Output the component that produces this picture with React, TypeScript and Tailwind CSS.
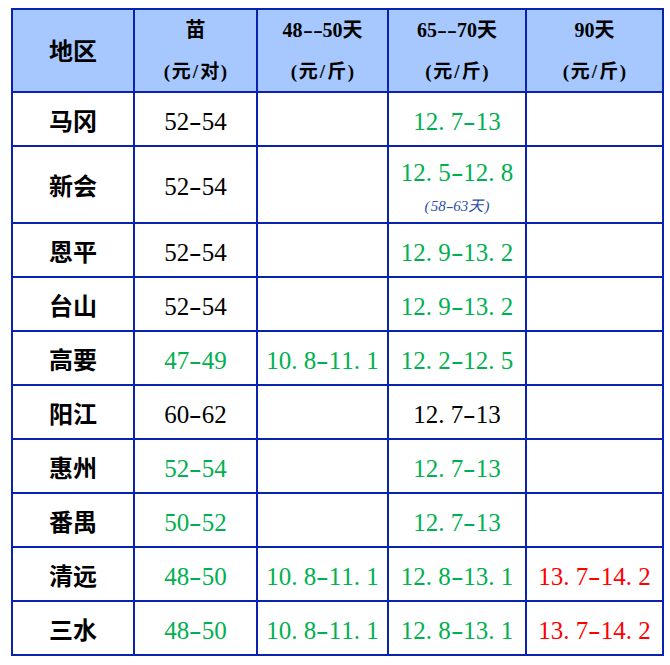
const FONT = { fontFamily: '"Liberation Serif", "Noto Sans CJK SC", serif' }

type Tone = 'black' | 'green' | 'red'

interface Cell {
  text: string
  tone?: Tone
  note?: string
}

interface Row {
  region: string
  cells: Cell[]
}

const toneClass: Record<Tone, string> = {
  black: 'text-black',
  green: 'text-[#00b050]',
  red: 'text-[#ff0000]',
}

const rows: Row[] = [
  { region: '马冈', cells: [{ text: '52-54' }, { text: '' }, { text: '12.7-13', tone: 'green' }, { text: '' }] },
  {
    region: '新会',
    cells: [{ text: '52-54' }, { text: '' }, { text: '12.5-12.8', tone: 'green', note: '(58-63天)' }, { text: '' }],
  },
  { region: '恩平', cells: [{ text: '52-54' }, { text: '' }, { text: '12.9-13.2', tone: 'green' }, { text: '' }] },
  { region: '台山', cells: [{ text: '52-54' }, { text: '' }, { text: '12.9-13.2', tone: 'green' }, { text: '' }] },
  {
    region: '高要',
    cells: [
      { text: '47-49', tone: 'green' },
      { text: '10.8-11.1', tone: 'green' },
      { text: '12.2-12.5', tone: 'green' },
      { text: '' },
    ],
  },
  { region: '阳江', cells: [{ text: '60-62' }, { text: '' }, { text: '12.7-13' }, { text: '' }] },
  {
    region: '惠州',
    cells: [{ text: '52-54', tone: 'green' }, { text: '' }, { text: '12.7-13', tone: 'green' }, { text: '' }],
  },
  {
    region: '番禺',
    cells: [{ text: '50-52', tone: 'green' }, { text: '' }, { text: '12.7-13', tone: 'green' }, { text: '' }],
  },
  {
    region: '清远',
    cells: [
      { text: '48-50', tone: 'green' },
      { text: '10.8-11.1', tone: 'green' },
      { text: '12.8-13.1', tone: 'green' },
      { text: '13.7-14.2', tone: 'red' },
    ],
  },
  {
    region: '三水',
    cells: [
      { text: '48-50', tone: 'green' },
      { text: '10.8-11.1', tone: 'green' },
      { text: '12.8-13.1', tone: 'green' },
      { text: '13.7-14.2', tone: 'red' },
    ],
  },
]

// half-width ascii, like the original's SimSun rendering
function Mono({ text }: { text: string }) {
  return (
    <>
      {[...text].map((c, i) => {
        if (c.charCodeAt(0) >= 128) return <span key={i}>{c}</span>
        if (c === '.')
          return (
            <span key={i} className="inline-block w-[0.5em] text-left">
              {c}
            </span>
          )
        if (c === '-')
          return (
            <span key={i} className="inline-block w-[0.5em] text-center scale-x-150">
              {c}
            </span>
          )
        return (
          <span key={i} className="inline-block w-[0.5em] text-center">
            {c}
          </span>
        )
      })}
    </>
  )
}

function HeaderCell({ top, bottom }: { top: string; bottom: string }) {
  return (
    <div className="bg-[#a6c8ff] flex flex-col items-center justify-center gap-[18px] font-bold text-black">
      <div className="text-[20px] leading-[24px]">
        <Mono text={top} />
      </div>
      <div className="text-[19px] leading-[24px]">
        <Mono text={bottom} />
      </div>
    </div>
  )
}

export default function App() {
  return (
    <div className="bg-white w-[670px] h-[665px] pt-[8px] pl-[11px]" style={FONT}>
      <div className="grid w-fit grid-cols-[120px_121px_129px_136px_135px] grid-rows-[81px_52px_75px_repeat(8,52px)] gap-[2px] p-[2px] bg-[#0a22b0]">
        <div className="bg-[#a6c8ff] flex items-center justify-center text-[24px] font-bold text-black pt-[3px]">
          地区
        </div>
        <HeaderCell top="苗" bottom="(元/对)" />
        <HeaderCell top="48--50天" bottom="(元/斤)" />
        <HeaderCell top="65--70天" bottom="(元/斤)" />
        <HeaderCell top="90天" bottom="(元/斤)" />

        {rows.map((row) => (
          <div key={row.region} className="contents">
            <div className="bg-white flex items-center justify-center pt-[5px] text-[24px] font-bold text-black">
              {row.region}
            </div>
            {row.cells.map((cell, i) => (
              <div
                key={i}
                className={`bg-white flex flex-col items-center justify-center pt-[5px] text-[25px] ${
                  toneClass[cell.tone ?? 'black']
                }`}
              >
                {cell.text && (
                  <div className="leading-[28px]">
                    <Mono text={cell.text} />
                  </div>
                )}
                {cell.note && (
                  <div className="text-[15px] italic text-[#2a4fa8] leading-[18px] mt-[10px]">
                    <Mono text={cell.note} />
                  </div>
                )}
              </div>
            ))}
          </div>
        ))}
      </div>
    </div>
  )
}
